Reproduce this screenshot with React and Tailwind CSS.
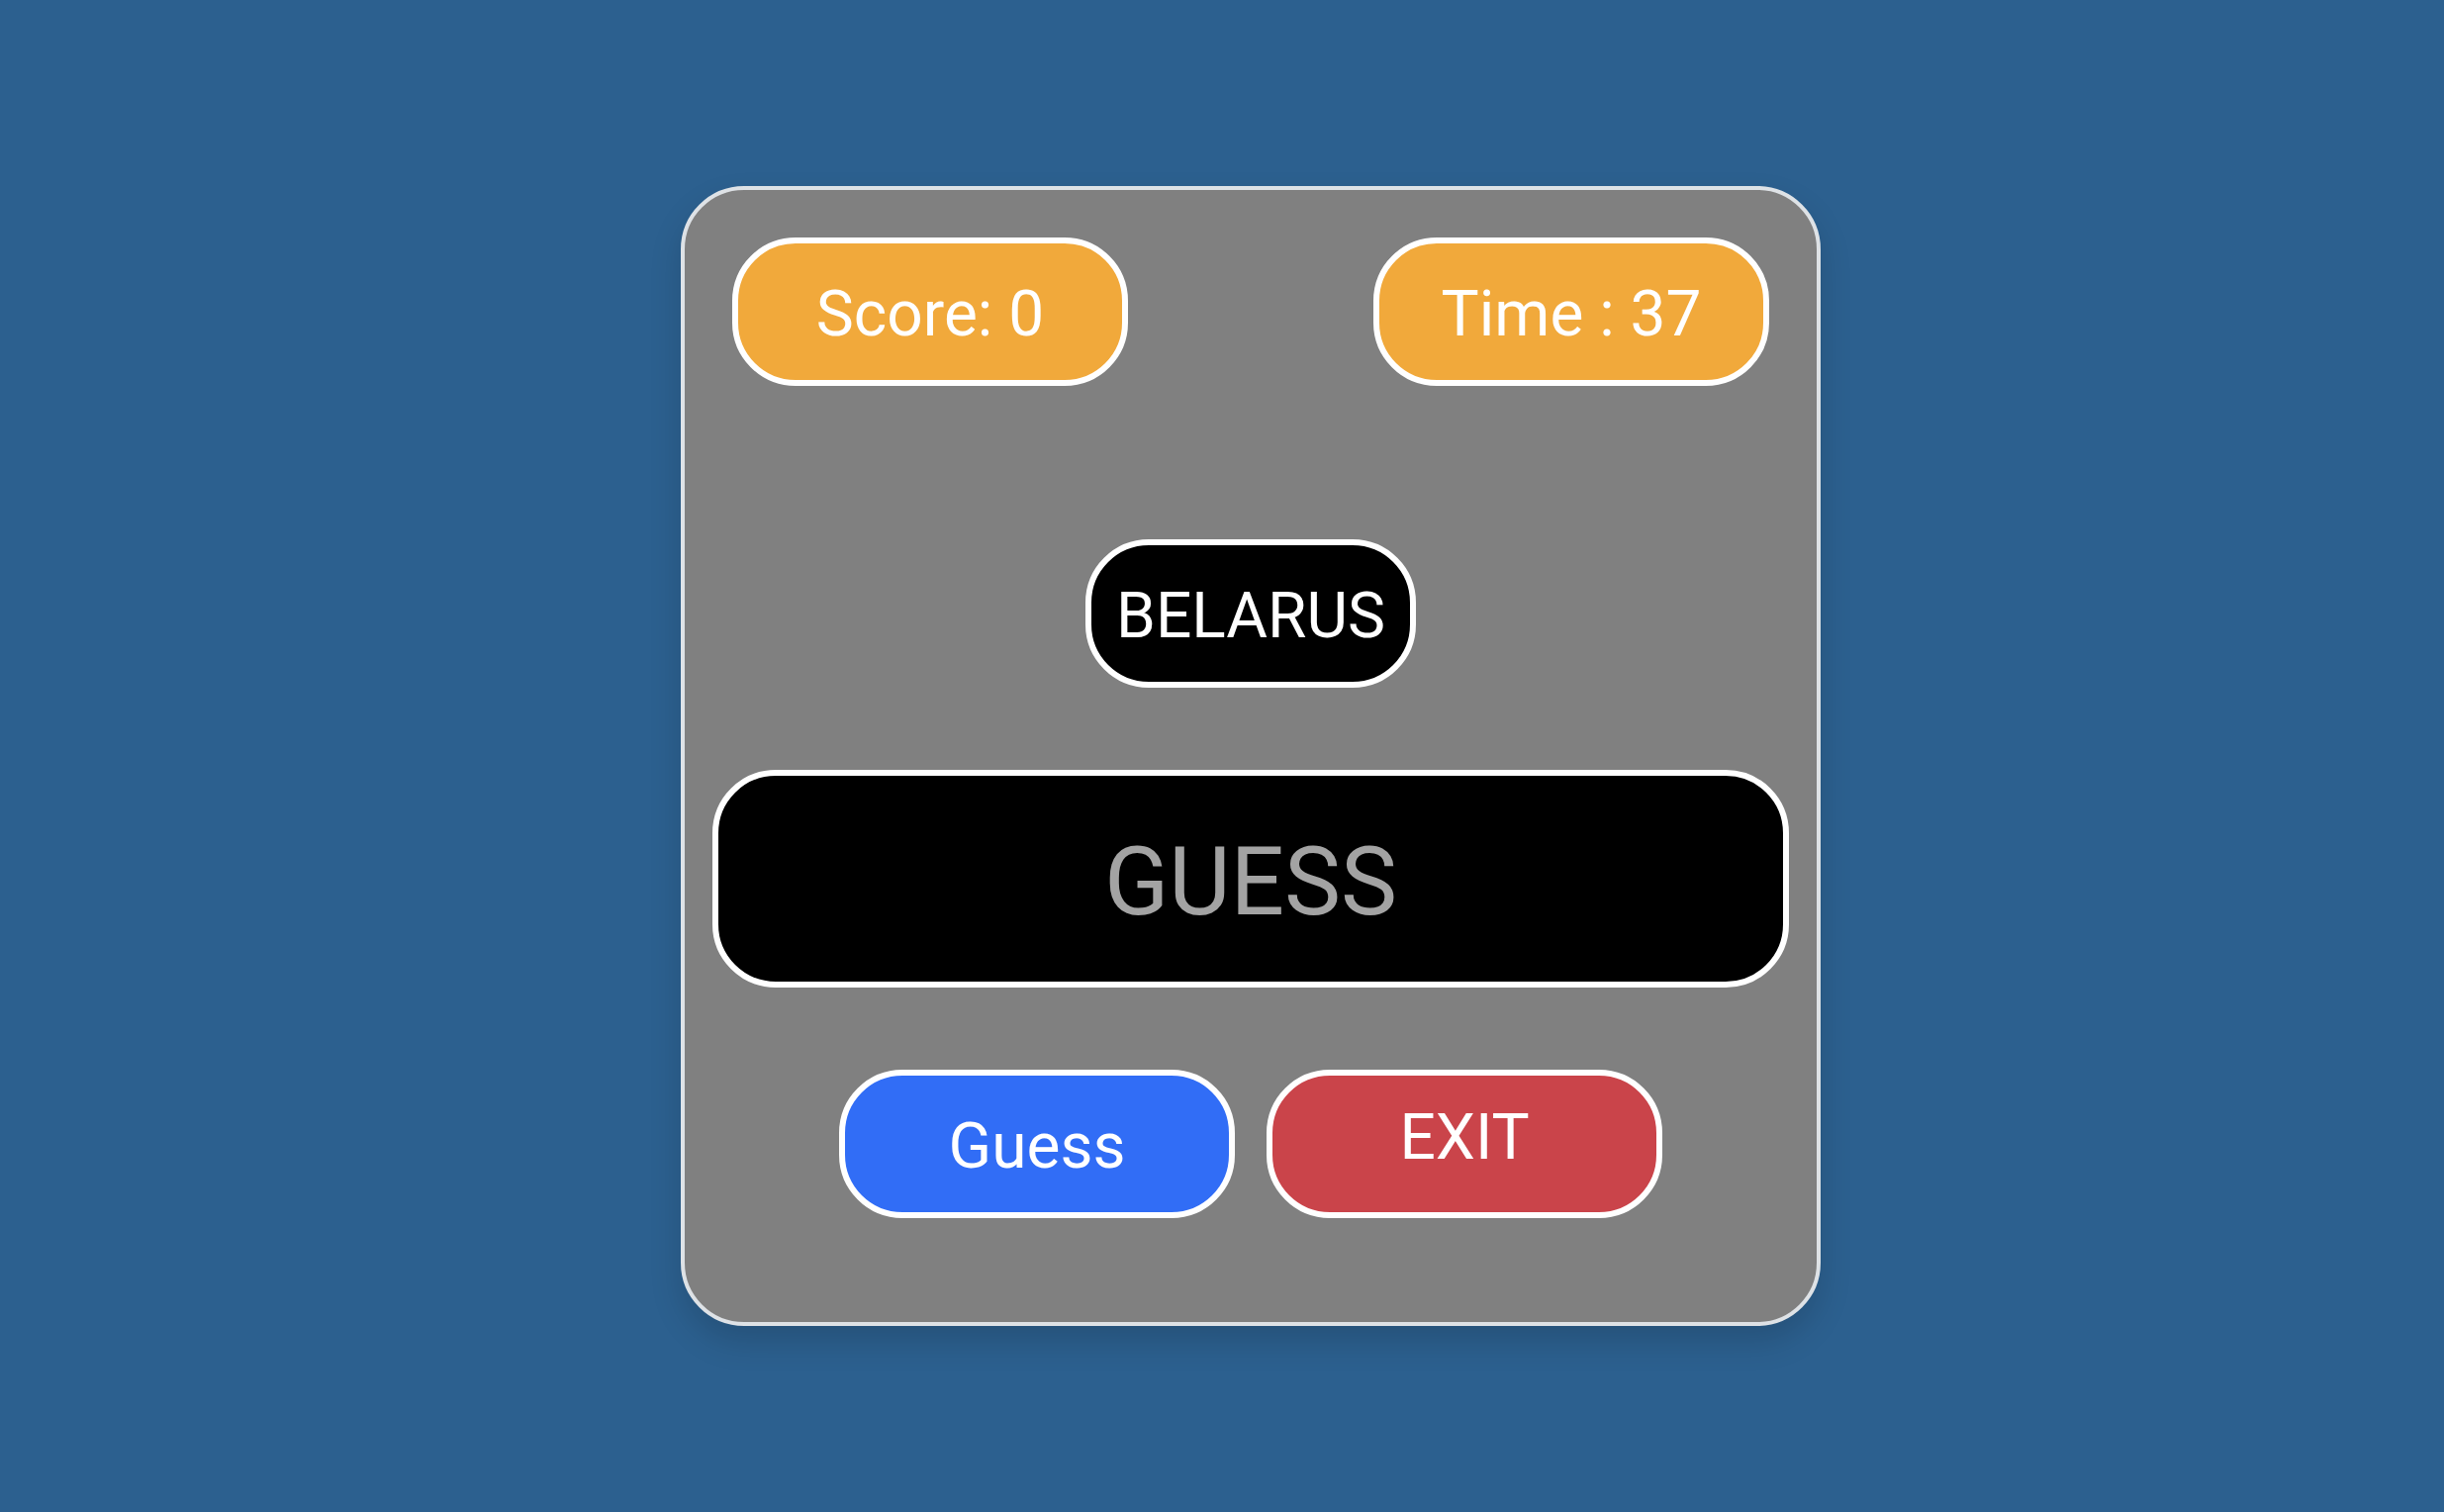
import { useState } from "react";

const pill =
  "h-[150px] rounded-[64px] border-6 border-white pt-1.5 text-[64px] text-white";

export default function App() {
  const [guess, setGuess] = useState("");

  return (
    <main className="flex min-h-screen items-center justify-center bg-[#2c608f] pl-[58px] font-[Roboto,Inter,sans-serif]">
      <form
        className="w-full max-w-[1152px] rounded-[64px] border-4 border-[#dee2e6] bg-[#808080] px-7 pt-12 pb-[105px] shadow-[0_16px_32px_rgba(0,0,0,0.15)]"
        onSubmit={(event) => event.preventDefault()}
      >
        <div className="flex justify-between px-5">
          <div className={`${pill} flex w-[400px] items-center justify-center bg-[#f1a93b]`}>
            Score: 0
          </div>
          <div className={`${pill} flex w-[400px] items-center justify-center bg-[#f1a93b]`}>
            Time : 37
          </div>
        </div>

        <div className="mt-[155px] flex justify-center">
          <div className={`${pill} flex items-center bg-black px-[25px]`}>BELARUS</div>
        </div>

        <input
          type="text"
          aria-label="Your guess"
          placeholder="GUESS"
          value={guess}
          onChange={(event) => setGuess(event.target.value)}
          className="mt-[83px] block h-[220px] w-full rounded-[64px] border-6 border-white bg-black pt-1.5 text-center text-[96px] text-white placeholder:text-[#a3a3a3]"
        />

        <div className="mt-[83px] flex justify-center gap-8">
          <button type="submit" className={`${pill} w-[400px] bg-[#316df6]`}>
            Guess
          </button>
          <button type="button" className={`${pill} w-[400px] bg-[#ca444a] pb-[18px]`}>
            EXIT
          </button>
        </div>
      </form>
    </main>
  );
}
